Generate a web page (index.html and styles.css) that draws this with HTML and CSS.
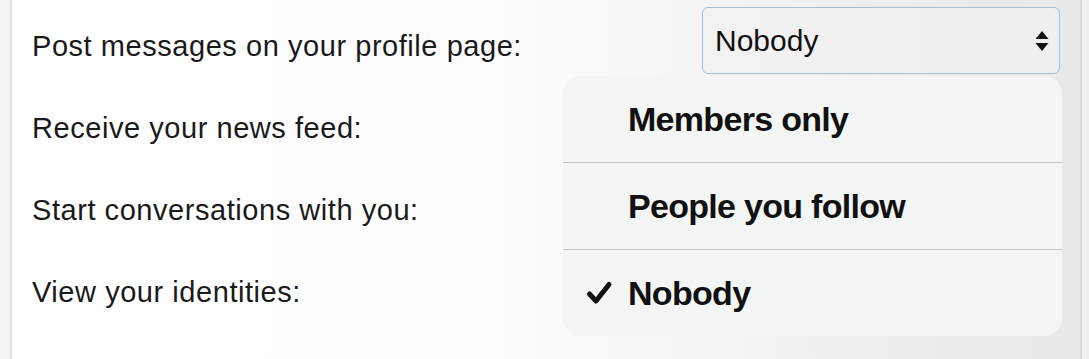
FILE: index.html
```html
<!DOCTYPE html>
<html>
<head>
<meta charset="utf-8">
<link rel="stylesheet" href="styles.css">
</head>
<body>
<div class="page">
  <div class="side"></div>
  <div class="main">
    <div class="rows">
      <div class="row first">
        <span class="label">Post messages on your profile page:</span>
        <div class="select">
          <span>Nobody</span>
          <svg class="arrows" width="14" height="26" viewBox="0 0 14 26"><path d="M7 3 L13.5 11 H0.5 Z M7 23 L13.5 15 H0.5 Z" fill="#111"/></svg>
        </div>
      </div>
      <div class="row second"><span class="label">Receive your news feed:</span></div>
      <div class="row"><span class="label">Start conversations with you:</span></div>
      <div class="row"><span class="label">View your identities:</span></div>
    </div>
    <div class="menu">
      <div class="opt"><span class="check"></span><span>Members only</span></div>
      <div class="opt"><span class="check"></span><span>People you follow</span></div>
      <div class="opt"><span class="check"><svg width="28" height="26" viewBox="0 0 28 26"><path d="M4.5 14 L11 21 L24 4.5" fill="none" stroke="#111" stroke-width="5" stroke-linecap="round" stroke-linejoin="round"/></svg></span><span>Nobody</span></div>
    </div>
  </div>
  <div class="edge"></div>
</div>
</body>
</html>
```
FILE: styles.css
```css
html, body {
  margin: 0;
  padding: 0;
}
body {
  width: 1089px;
  height: 359px;
  overflow: hidden;
  font-family: "Liberation Sans", Arial, sans-serif;
  color: #1a1a1a;
}
.page {
  display: flex;
  height: 359px;
}
.side {
  width: 10px;
  background: #f3f3f3;
  border-right: 2px solid #e2e2e2;
}
.main {
  flex: 1;
  position: relative;
  background: linear-gradient(90deg, #ffffff 0%, #fdfdfd 45%, #eeeeee 80%, #e8e8e8 100%);
}
.edge {
  width: 7px;
  background: #f0f0f0;
  border-left: 2px solid #d9d9d9;
}
.rows {
  display: flex;
  flex-direction: column;
  padding-top: 7px;
}
.row {
  height: 82px;
  display: flex;
  align-items: center;
  padding-left: 20px;
}
.row.first {
  height: 67px;
  justify-content: space-between;
  padding-right: 20px;
}
.row.first .label {
  padding-top: 11px;
}
.row.second {
  margin-top: 12px;
}
.label {
  font-size: 29px;
  letter-spacing: 0.55px;
  padding-top: 2px;
}
.select {
  width: 358px;
  height: 67px;
  box-sizing: border-box;
  border: 1.5px solid #9fc2df;
  border-radius: 6px;
  background: linear-gradient(90deg, #f2f2f2, #efefef);
  display: flex;
  align-items: center;
  justify-content: space-between;
  padding: 0 10px 0 12px;
  font-size: 30px;
  color: #111;
}
.menu {
  position: absolute;
  left: 551px;
  top: 76px;
  width: 499px;
  height: 260px;
  border-radius: 18px;
  background: #f4f5f5;
  display: flex;
  flex-direction: column;
  overflow: hidden;
}
.opt {
  flex: 1;
  display: flex;
  align-items: center;
  font-weight: bold;
  font-size: 34px;
  letter-spacing: -0.7px;
  color: #111;
  border-bottom: 1px solid #c4c4c4;
}
.opt:last-child { border-bottom: none; }
.check {
  width: 65px;
  display: flex;
  justify-content: flex-start;
  box-sizing: border-box;
  padding-left: 22px;
}
```
